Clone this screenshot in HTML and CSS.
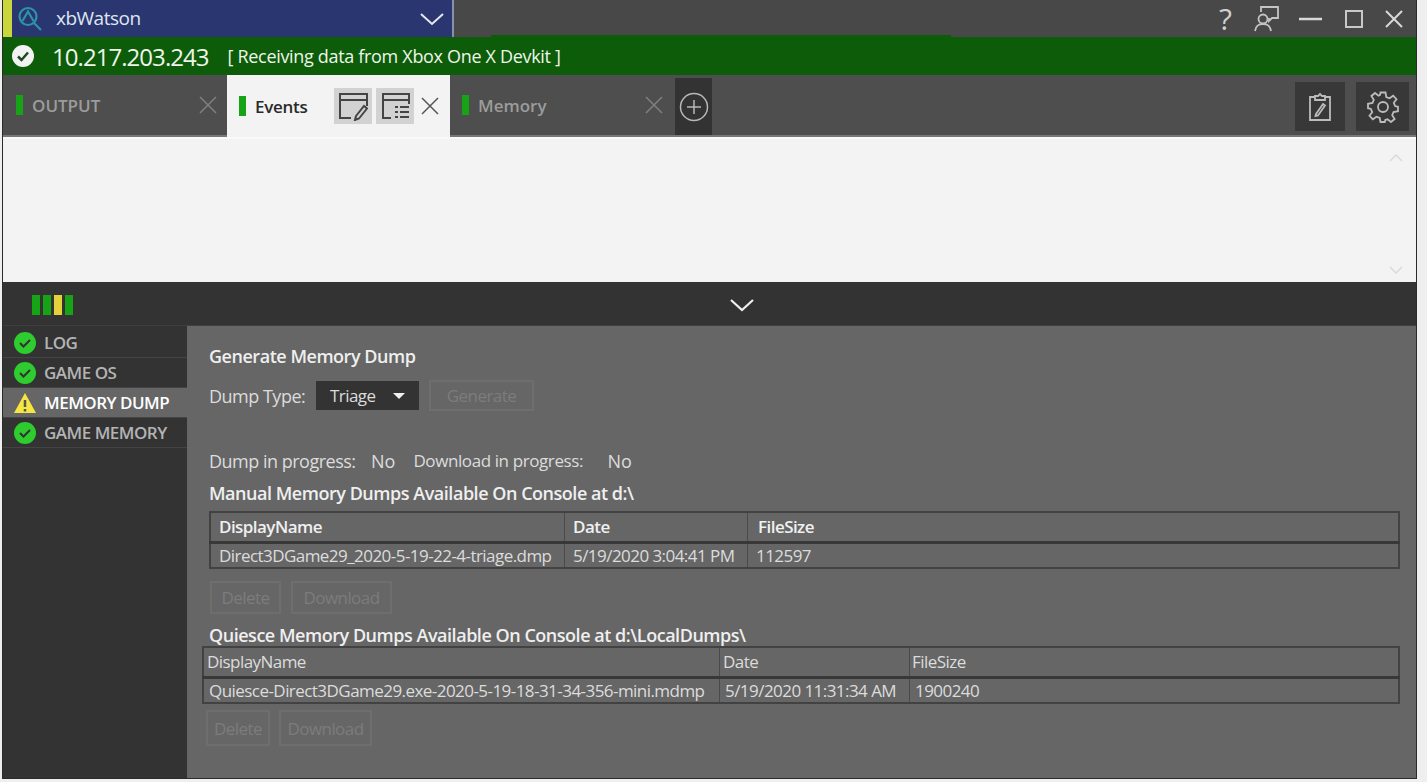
FILE: index.html
```html
<!DOCTYPE html>
<html lang="en">
<head>
  <meta charset="UTF-8">
  <title>xbWatson</title>
  <link rel="stylesheet" href="styles.css">
</head>
<body>

<div class="window">

  <div class="titlebar">
    <div class="picker">
      <svg class="picker-logo" width="26" height="26" viewBox="0 0 26 26" fill="none" stroke="#2f93a8" stroke-width="2.200">
        <circle cx="11" cy="10.500" r="8.500"/>
        <path d="M5.500 15 L11 5.500 L16.500 15 M17 17 L24 24"/>
      </svg>
      <span class="picker-name">xbWatson</span>
      <svg class="picker-arrow" width="24" height="14" viewBox="0 0 24 14" fill="none" stroke="#e8e8f0" stroke-width="2">
        <path d="M1 2 L12 12 L23 2"/>
      </svg>
    </div>
    <div class="win-buttons">
      <span class="help">?</span>
      <svg class="presenter" width="26" height="26" viewBox="0 0 26 26" fill="none" stroke="#c4c4c4" stroke-width="1.800">
        <path d="M8 6 V1 H25 V12 H19 L16 15 V12"/>
        <circle cx="10" cy="13" r="4.500"/>
        <path d="M2 25 C3 19 6 18 10 18 C14 18 17 19 18 25"/>
      </svg>
      <svg width="24" height="24" viewBox="0 0 24 24" stroke="#d8d8d8" stroke-width="2.500">
        <path d="M0 12 H23"/>
      </svg>
      <svg width="18" height="18" viewBox="0 0 18 18" fill="none" stroke="#c8c8c8" stroke-width="2">
        <rect x="1" y="1" width="16" height="16"/>
      </svg>
      <svg width="18" height="18" viewBox="0 0 18 18" fill="none" stroke="#d8d8d8" stroke-width="2">
        <path d="M1 1 L17 17 M17 1 L1 17"/>
      </svg>
    </div>
  </div>

  <div class="statusbar">
    <svg width="22" height="22" viewBox="0 0 22 22">
      <circle cx="11" cy="11" r="11" fill="#f2f2f2"/>
      <path d="M6 11.500 L9.500 15 L16 7.500" fill="none" stroke="#1c4a1c" stroke-width="2.500"/>
    </svg>
    <span class="ip">10.217.203.243</span>
    <span class="status-text">[ Receiving data from Xbox One X Devkit ]</span>
  </div>

  <div class="tabbar">
    <div class="tab tab-output">
      <i class="tab-mark"></i><span class="tab-title">OUTPUT</span>
      <svg class="tab-close" width="18" height="18" viewBox="0 0 18 18" stroke="#808080" stroke-width="1.500"><path d="M1 1 L17 17 M17 1 L1 17"/></svg>
    </div>
    <div class="tab tab-active">
      <i class="tab-mark"></i><span class="tab-title">Events</span>
      <span class="tool-btn tool-first">
        <svg width="30" height="30" viewBox="0 0 30 30" fill="none" stroke="#444" stroke-width="2">
          <path d="M13 27 H2 V3 H29 V15 M2 9 H29"/>
          <path d="M18 25 L26 15 L29 17.500 L21 27.500 L17 29 Z"/>
        </svg>
      </span>
      <span class="tool-btn">
        <svg width="30" height="30" viewBox="0 0 30 30" fill="none" stroke="#444" stroke-width="2">
          <path d="M11 27 H3 V3 H29 V13 M3 9 H29"/>
          <path d="M15 16 H18 M20 16 H29 M15 21 H18 M20 21 H29 M15 26 H18 M20 26 H29" stroke-width="2.200"/>
        </svg>
      </span>
      <svg class="tab-close" width="18" height="18" viewBox="0 0 18 18" stroke="#555" stroke-width="1.500"><path d="M1 1 L17 17 M17 1 L1 17"/></svg>
    </div>
    <div class="tab tab-memory">
      <i class="tab-mark"></i><span class="tab-title">Memory</span>
      <svg class="tab-close" width="18" height="18" viewBox="0 0 18 18" stroke="#808080" stroke-width="1.500"><path d="M1 1 L17 17 M17 1 L1 17"/></svg>
    </div>
    <div class="tab-add">
      <svg width="30" height="30" viewBox="0 0 30 30" fill="none" stroke="#b8b8b8" stroke-width="1.500">
        <circle cx="15" cy="15" r="13.500"/>
        <path d="M15 8 V22 M8 15 H22"/>
      </svg>
    </div>
    <div class="tab-tools">
      <span class="dark-btn">
        <svg width="24" height="30" viewBox="0 0 24 30" fill="none" stroke="#bcbcbc" stroke-width="1.800">
          <path d="M7 5 H2 V28 H22 V5 H17 M7 8 V4 H10 L12 2 L14 4 H17 V8 Z"/>
          <path d="M8 22 L15 12 L17 13.500 L10 23.500 L7.500 24 Z"/>
        </svg>
      </span>
      <span class="dark-btn">
        <svg width="32" height="32" viewBox="0 0 32 32" fill="none" stroke="#bcbcbc" stroke-width="1.800">
          <circle cx="16" cy="16" r="5"/>
          <path d="M13.500 1.500 H18.500 L19.300 6 L22.500 7.300 L26.200 4.700 L29.500 8.200 L26.800 11.800 L28.100 15 L31 15.800 V20.200 L26.500 21 L25.200 24.200 L27.600 28 L24 31 L20.500 28.300 L18.300 29 L17.800 31 H13.500 L12.700 27 L9.500 25.700 L5.800 28.300 L2.500 24.800 L5.200 21.200 L3.900 18 L1 17.200 V12.800 L5.500 12 L6.800 8.800 L4.400 5 L8 2 L11.500 4.700 L13 4 Z"/>
        </svg>
      </span>
    </div>
  </div>

  <div class="outputpane">
    <svg width="14" height="8" viewBox="0 0 14 8" fill="none" stroke="#dadada" stroke-width="1.500"><path d="M1 7 L7 1 L13 7"/></svg>
    <svg width="14" height="8" viewBox="0 0 14 8" fill="none" stroke="#dadada" stroke-width="1.500"><path d="M1 1 L7 7 L13 1"/></svg>
  </div>

  <div class="splitter">
    <div class="meter">
      <i class="meter-green"></i><i class="meter-green"></i><i class="meter-yellow"></i><i class="meter-green"></i>
    </div>
    <svg class="splitter-arrow" width="24" height="13" viewBox="0 0 24 13" fill="none" stroke="#f0f0f0" stroke-width="2.200"><path d="M1 1 L12 11 L23 1"/></svg>
  </div>

  <div class="main">
    <div class="sidebar">
      <div class="side-item">
        <svg width="22" height="22" viewBox="0 0 22 22"><circle cx="11" cy="11" r="11" fill="#2ecc2e"/><path d="M6 11 L9.500 14.500 L16 8" fill="none" stroke="#333" stroke-width="2"/></svg>
        <span>LOG</span>
      </div>
      <div class="side-item">
        <svg width="22" height="22" viewBox="0 0 22 22"><circle cx="11" cy="11" r="11" fill="#2ecc2e"/><path d="M6 11 L9.500 14.500 L16 8" fill="none" stroke="#333" stroke-width="2"/></svg>
        <span>GAME OS</span>
      </div>
      <div class="side-item side-active">
        <svg width="22" height="22" viewBox="0 0 22 22"><path d="M11 1 L22 21 H0 Z" fill="#f5e642"/><path d="M11 8 V15 M11 17 V19.500" stroke="#555" stroke-width="2.500"/></svg>
        <span>MEMORY DUMP</span>
      </div>
      <div class="side-item">
        <svg width="22" height="22" viewBox="0 0 22 22"><circle cx="11" cy="11" r="11" fill="#2ecc2e"/><path d="M6 11 L9.500 14.500 L16 8" fill="none" stroke="#333" stroke-width="2"/></svg>
        <span>GAME MEMORY</span>
      </div>
    </div>

    <div class="panel">
      <h3 class="heading-top">Generate Memory Dump</h3>
      <div class="dump-row">
        <span class="dump-label">Dump Type:</span>
        <span class="select">Triage<i class="select-arrow"></i></span>
        <span class="btn btn-generate">Generate</span>
      </div>
      <div class="progress-row">
        <span class="progress-first">Dump in progress:</span><span>No</span>
        <span class="progress-second">Download in progress:</span><span class="progress-last">No</span>
      </div>

      <h3 class="heading-manual">Manual Memory Dumps Available On Console at d:\</h3>
      <table class="grid grid-manual">
        <tr>
          <th class="col-name">DisplayName</th>
          <th class="col-date">Date</th>
          <th class="col-size">FileSize</th>
        </tr>
        <tr>
          <td>Direct3DGame29_2020-5-19-22-4-triage.dmp</td>
          <td>5/19/2020 3:04:41 PM</td>
          <td>112597</td>
        </tr>
      </table>
      <div class="btn-row btn-row-manual">
        <span class="btn">Delete</span>
        <span class="btn">Download</span>
      </div>

      <h3 class="heading-quiesce">Quiesce Memory Dumps Available On Console at d:\LocalDumps\</h3>
      <table class="grid grid-quiesce">
        <tr>
          <th class="col-name">DisplayName</th>
          <th class="col-date">Date</th>
          <th class="col-size">FileSize</th>
        </tr>
        <tr>
          <td>Quiesce-Direct3DGame29.exe-2020-5-19-18-31-34-356-mini.mdmp</td>
          <td>5/19/2020 11:31:34 AM</td>
          <td>1900240</td>
        </tr>
      </table>
      <div class="btn-row btn-row-quiesce">
        <span class="btn">Delete</span>
        <span class="btn">Download</span>
      </div>
    </div>
  </div>

</div>

</body>
</html>
```

FILE: styles.css
```css
html, body {
  margin: 0;
  height: 782px;
  overflow: hidden;
  background-color: #efefef;
}

.window {
  width: 1415px;
  height: 779px;
  margin-left: 2px;
  display: flex;
  flex-direction: column;
  box-sizing: border-box;
  font-family: "Open Sans", "Noto Sans", sans-serif;
  font-size: 17px;
  color: #e6e6e6;
  border-left: 1px solid #2b2b2b;
  border-right: 1px solid #2b2b2b;
  border-bottom: 1px solid #2b2b2b;
}

/* title bar */
.titlebar {
  height: 37px;
  flex: none;
  display: flex;
  justify-content: space-between;
  background-color: #484848;
}

.picker {
  width: 451px;
  display: flex;
  align-items: center;
  background-color: #2a3670;
  border-left: 9px solid #c9d63c;
  border-right: 2px solid #8a90a8;
  box-sizing: border-box;
}

.picker-logo {
  margin-left: 5px;
}

.picker-name {
  margin-left: 13px;
  margin-bottom: 2px;
  font-size: 19px;
  letter-spacing: -0.500px;
  color: #dfe6f2;
}

.picker-arrow {
  margin-left: auto;
  margin-right: 8px;
}

.win-buttons {
  display: flex;
  align-items: center;
  gap: 22px;
  padding-right: 13px;
}

.help {
  font-size: 30px;
  line-height: 30px;
  color: #d0d0d0;
}

.presenter {
  margin-left: -1px;
  margin-right: -2px;
}

/* status */
.statusbar {
  position: relative;
  height: 38px;
  flex: none;
  display: flex;
  align-items: center;
  padding-left: 9px;
  background-color: #0d5c09;
  color: #eef6ea;
}

.statusbar::before {
  content: "";
  position: absolute;
  left: 488px;
  top: -2px;
  width: 460px;
  height: 2px;
  background-color: #0d5c09;
}

.ip {
  margin-left: 18px;
  font-size: 24px;
  letter-spacing: -0.950px;
}

.status-text {
  margin-left: 19px;
  font-size: 18px;
  letter-spacing: -0.320px;
}

/* tabs */
.tabbar {
  height: 62px;
  flex: none;
  box-sizing: border-box;
  display: flex;
  background-color: #4e4e4e;
  border-bottom: 2px solid #777;
}

.tab {
  display: flex;
  align-items: center;
  box-sizing: border-box;
  height: 60px;
}

.tab-output {
  width: 224px;
  padding-left: 13px;
}

.tab-active {
  width: 223px;
  height: 62px;
  padding-left: 12px;
  background-color: #f3f3f3;
  color: #2a2a2a;
}

.tab-memory {
  width: 225px;
  padding-left: 12px;
}

.tab-mark {
  width: 7px;
  height: 20px;
  background-color: #16a316;
}

.tab-title {
  margin-left: 9px;
  font-size: 17px;
  font-weight: 600;
  letter-spacing: 0;
  color: #9c9c9c;
}

.tab-active .tab-title {
  letter-spacing: -0.300px;
  color: #2a2a2a;
}

.tab-output .tab-close {
  margin-left: auto;
  margin-right: 10px;
}

.tab-memory .tab-close {
  margin-left: auto;
  margin-right: 12px;
}

.tool-btn {
  width: 38px;
  height: 36px;
  display: flex;
  align-items: center;
  justify-content: center;
  background-color: #d2d2d2;
  margin-left: 4px;
}

.tool-first {
  margin-left: 27px;
}

.tab-active .tab-close {
  margin-left: 7px;
}

.tab-add {
  width: 37px;
  height: 57px;
  margin-top: 3px;
  display: flex;
  align-items: center;
  justify-content: center;
  background-color: #333;
}

.tab-tools {
  margin-left: auto;
  display: flex;
  gap: 11px;
  padding: 7px 7px 0 0;
}

.dark-btn {
  width: 50px;
  height: 49px;
  display: flex;
  align-items: center;
  justify-content: center;
  background-color: #383838;
}

.dark-btn + .dark-btn {
  width: 53px;
}

/* output pane */
.outputpane {
  height: 145px;
  flex: none;
  box-sizing: border-box;
  display: flex;
  flex-direction: column;
  align-items: flex-end;
  justify-content: space-between;
  padding: 15px 13px 8px 0;
  background-color: #f3f3f3;
  border-top: 2px solid #fafafa;
}

.splitter {
  height: 44px;
  flex: none;
  display: flex;
  align-items: center;
  padding-top: 3px;
  background-color: #333;
  border-bottom: 1px solid #3f3f3f;
  box-sizing: border-box;
}

.meter {
  display: flex;
  gap: 3px;
  margin-left: 29px;
}

.meter i {
  width: 8px;
  height: 20px;
}

.meter-green {
  background-color: #16a316;
}

.meter-yellow {
  background-color: #e3d23a;
}

.splitter-arrow {
  margin-left: 657px;
}

/* lower area */
.main {
  flex: 1;
  display: flex;
  min-height: 0;
}

.sidebar {
  width: 184px;
  flex: none;
  padding-top: 2px;
  background-color: #333;
}

.side-item {
  height: 30px;
  display: flex;
  align-items: center;
  gap: 8px;
  padding-left: 11px;
  box-sizing: border-box;
  border-bottom: 1px solid #444;
  font-size: 17px;
  font-weight: 600;
  letter-spacing: -0.500px;
  color: #b4b4b4;
}

.side-item svg {
  flex: none;
}

.side-active {
  background-color: #666;
  color: #fff;
}

.panel {
  flex: 1;
  background-color: #666;
  padding-left: 22px;
  font-size: 17px;
  letter-spacing: -0.550px;
  color: #dcdcdc;
}

h3 {
  margin: 0;
  font-size: 18px;
  font-weight: 600;
  line-height: 22px;
  letter-spacing: -0.470px;
  color: #efefef;
}

.heading-top {
  margin-top: 19px;
}

.dump-row {
  display: flex;
  align-items: center;
  height: 31px;
  margin-top: 13px;
}

.dump-label {
  width: 95px;
  font-size: 18px;
  letter-spacing: -0.500px;
  white-space: nowrap;
}

.select {
  width: 103px;
  height: 29px;
  margin-left: 12px;
  padding-left: 14px;
  box-sizing: border-box;
  display: flex;
  align-items: center;
  background-color: #333;
}

.select-arrow {
  margin-left: 17px;
  border-left: 6px solid transparent;
  border-right: 6px solid transparent;
  border-top: 6px solid #f0f0f0;
}

.btn {
  display: inline-flex;
  align-items: center;
  justify-content: center;
  border: 2px solid #6e6e6e;
  color: #7c7c7c;
  box-sizing: border-box;
}

.btn-generate {
  width: 105px;
  height: 31px;
  margin-left: 10px;
}

.progress-row {
  display: flex;
  margin-top: 39px;
  line-height: 22px;
  font-size: 18px;
  letter-spacing: 0;
}

.progress-first {
  width: 162px;
  letter-spacing: -0.500px;
  white-space: nowrap;
}

.progress-second {
  width: 194px;
  margin-left: 18px;
  font-size: 17px;
  letter-spacing: -0.400px;
  white-space: nowrap;
}

.heading-manual {
  margin-top: 10px;
}

.grid {
  border-collapse: collapse;
  table-layout: fixed;
  border: 2px solid #424242;
}

.grid th {
  font-weight: 400;
  text-align: left;
  height: 28px;
  line-height: 20px;
  padding: 0 0 0 8px;
  border-bottom: 3px solid #383838;
  border-right: 1px solid #4a4a4a;
}

.grid td {
  height: 23px;
  line-height: 20px;
  padding: 0 0 0 8px;
  border-right: 1px solid #4a4a4a;
  white-space: nowrap;
}

.grid .col-size {
  padding-left: 10px;
}

.grid-manual {
  width: 1191px;
  margin-top: 7px;
}

.grid-manual th {
  font-weight: 600;
  color: #f0f0f0;
}

.grid-manual .col-name {
  width: 345px;
}

.grid-manual .col-date {
  width: 174px;
}

.btn-row {
  display: flex;
  margin-top: 12px;
}

.btn-row .btn {
  height: 33px;
}

.btn-row-manual {
  gap: 10px;
  margin-left: 1px;
}

.btn-row-manual .btn:first-child {
  width: 71px;
}

.btn-row-manual .btn:last-child {
  width: 101px;
}

.heading-quiesce {
  margin-top: 10px;
}

.grid-quiesce {
  width: 1198px;
  margin: 0 0 0 -7px;
}

.grid-quiesce td {
  padding-left: 5px;
}

.grid-quiesce th {
  height: 28px;
  padding-left: 3px;
  color: #dcdcdc;
}

.grid-quiesce .col-size {
  padding-left: 2px;
}

.grid-quiesce .col-name {
  width: 512px;
}

.grid-quiesce .col-date {
  width: 186px;
}

.btn-row-quiesce {
  gap: 9px;
  margin: 6px 0 0 -3px;
}

.btn-row-quiesce .btn {
  height: 36px;
}

.btn-row-quiesce .btn:first-child {
  width: 64px;
}

.btn-row-quiesce .btn:last-child {
  width: 93px;
}
```
